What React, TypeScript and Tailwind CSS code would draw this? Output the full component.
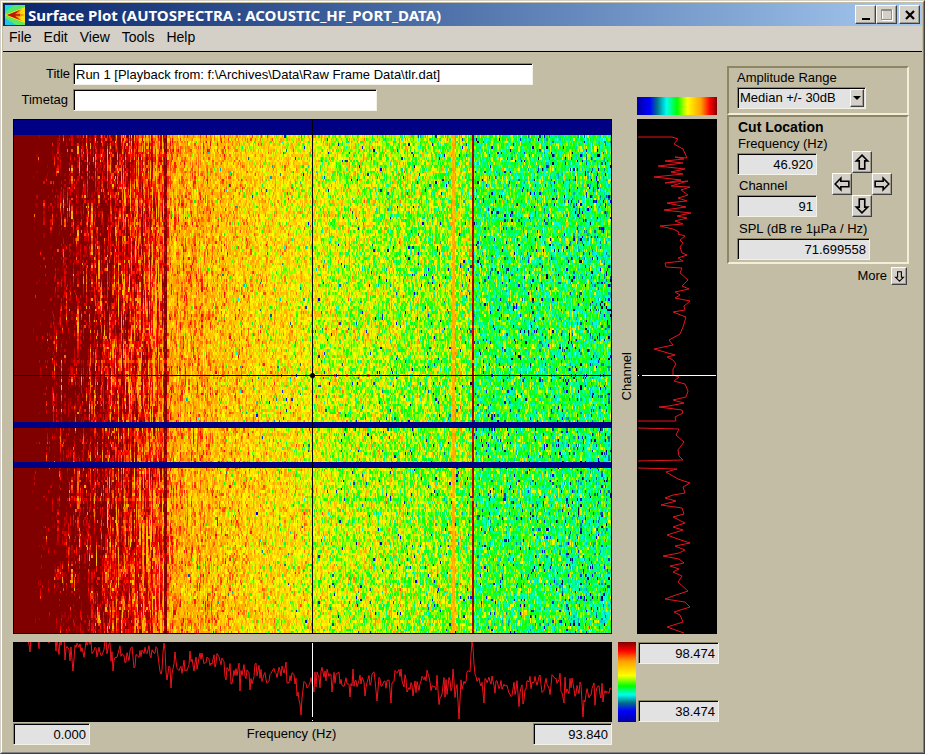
import { useState } from 'react';

const PLOT_W = 599;
const PLOT_H = 515;
const BINS = 512;
const ROWS = 190;
const LEVELS = 36;

// [position, r, g, b]
const colorStops = [
  [0, 0, 0, 60],
  [0.06, 0, 0, 150],
  [0.16, 0, 0, 255],
  [0.27, 0, 110, 140],
  [0.38, 0, 255, 240],
  [0.53, 0, 255, 0],
  [0.66, 255, 255, 0],
  [0.8, 255, 160, 0],
  [0.9, 255, 0, 0],
  [1, 128, 0, 0],
];

const baseLevel = [
  [0, 1.4], [14, 1.25], [24, 1.15], [50, 1.06], [80, 0.99], [105, 0.94], [125, 0.89], [150, 0.855],
  [156, 0.8], [220, 0.75], [280, 0.7], [320, 0.65], [380, 0.625], [425, 0.6],
  [457, 0.6], [464, 0.53], [530, 0.52], [599, 0.49],
];

const spectrumBase = [
  [0, -12], [12, -10], [40, -6], [50, 2], [60, 8], [66, 0], [80, 5], [95, 8], [110, 6],
  [125, 14], [140, 9], [148, 18], [156, 25], [165, 20], [185, 19], [205, 22], [215, 29],
  [228, 32], [245, 29], [260, 33], [275, 28], [287, 42], [298, 37], [310, 34], [328, 34],
  [335, 44], [345, 36], [365, 44], [390, 36], [400, 44], [415, 38], [430, 46], [445, 42],
  [460, 38], [480, 42], [510, 47], [527, 40], [550, 45], [575, 47], [599, 46],
];

const spectrumSpikes: Record<number, number> = {
  17: 10, 43: 9, 52: 18, 59: 18, 60: 29, 100: 29, 113: 20, 121: 26, 150: 10, 151: 1, 152: 8,
  154: 38, 158: 46, 189: 11, 218: 42, 227: 49, 237: 48, 273: 20, 284: 54, 285: 50, 286: 58,
  287: 62, 288: 73, 289: 56, 294: 46, 301: 50, 337: 55, 340: 27, 352: 54, 364: 59, 378: 61,
  388: 27, 400: 54, 440: 27, 445: 60, 446: 77, 447: 58, 457: 30, 458: 12, 459: 0, 460: 6,
  461: 22, 462: 32, 471: 61, 510: 62, 527: 33, 551: 61, 569: 60, 570: 75, 571: 58, 590: 60,
};

const channelTrace =
  '1,18 35,18 41,20 37,25 46,30 50,39 38,38 47,40 28,42 46,44 21,47 48,50 34,53 46,55 17,58 44,61 ' +
  '28,64 51,62 34,67 53,68 44,71 51,76 41,79 50,82 30,84 49,88 27,91 54,94 40,97 50,99 38,102 46,105 ' +
  '23,107 36,110 42,113 41,115 48,117 43,121 46,124 43,128 45,134 50,136 41,139 46,142 28,144 29,148 ' +
  '45,149 43,154 51,161 45,167 52,170 38,173 43,176 38,179 53,182 47,187 48,191 36,193 49,198 46,208 ' +
  '43,215 32,221 36,226 17,230 38,236 30,238 36,241 39,245 36,250 36,256 42,258 37,262 48,265 51,272 ' +
  '49,278 36,281 47,284 32,287 22,288 45,291 46,294 38,298 39,302 1,302 M1,309 42,310 39,316 47,323 ' +
  '41,331 42,337 46,341 1,342 M1,349 40,350 29,353 41,360 53,364 46,368 48,374 36,376 28,379 39,382 ' +
  '24,386 45,389 47,395 36,398 48,404 36,408 46,411 30,416 41,420 53,424 38,427 48,431 42,434 26,437 ' +
  '42,440 47,444 33,447 42,450 36,453 45,457 41,463 51,472 36,477 28,480 48,483 53,488 37,493 43,496 ' +
  '46,503 30,508 47,514';

function createRandom(seed: number) {
  let s = seed;
  return () => {
    s = (s + 0x6d2b79f5) | 0;
    let t = Math.imul(s ^ (s >>> 15), 1 | s);
    t = (t + Math.imul(t ^ (t >>> 7), 61 | t)) ^ t;
    return ((t ^ (t >>> 14)) >>> 0) / 4294967296;
  };
}

function interpolate(points: number[][], x: number) {
  for (let i = 1; i < points.length; i++) {
    if (x <= points[i][0]) {
      const [x0, y0] = points[i - 1];
      const [x1, y1] = points[i];
      return y0 + ((y1 - y0) * (x - x0)) / (x1 - x0);
    }
  }
  return points[points.length - 1][1];
}

function levelColor(level: number) {
  const v = level / (LEVELS - 1);
  const channel = (i: number) => Math.round(interpolate(colorStops.map((s) => [s[0], s[i]]), v));
  return `rgb(${channel(1)},${channel(2)},${channel(3)})`;
}

const streakWidth = [
  [0, 0.12], [20, 0.15], [60, 0.16], [120, 0.13], [150, 0.11], [160, 0.09], [260, 0.1],
  [340, 0.13], [460, 0.14], [599, 0.16],
];

function buildSurface() {
  const random = createRandom(91);
  const gauss = () => random() + random() + random() + random() - 2;
  const state = Array.from({ length: BINS }, () => gauss());
  const columnGain = Array.from({ length: BINS }, () => gauss());
  const paths: string[] = Array(LEVELS).fill('');

  for (let row = 6; row < ROWS; row++) {
    const top = Math.round((row * PLOT_H) / ROWS);
    const height = Math.round(((row + 1) * PLOT_H) / ROWS) - top;
    let runStart = 0;
    let runLevel = -1;

    for (let bin = 0; bin < BINS; bin++) {
      const x = Math.round((bin * PLOT_W) / BINS);
      const keep = x < 150 ? 0.82 : x < 200 ? 0.55 : 0.25;
      state[bin] = keep * state[bin] + Math.sqrt(1 - keep * keep) * gauss();

      let v = interpolate(baseLevel, x) + state[bin] * interpolate(streakWidth, x);
      v += columnGain[bin] * (x < 150 ? 0.03 : 0.012);
      if (x > 16 && x < 150 && random() < 0.06) v -= 0.13;
      // broadband fades get more frequent towards high frequency
      const dip = random();
      if (x > 170 && dip < (x / PLOT_W) * 0.14) v -= 0.13;
      if (x > 170 && dip < (x / PLOT_W) ** 2 * 0.04) v -= 0.3;
      v = x > 150 ? Math.min(v, 0.9) : Math.max(v, 0.74);

      if (x >= 151 && x <= 153) v = random() < 0.85 ? 0.99 : 0.92;
      if (x >= 439 && x <= 441) v = 0.74 + random() * 0.06;
      if (x === 446 || x === 447) v += 0.05;
      if (x >= 458 && x <= 460) v = random() < 0.75 ? 0.97 : 0.9;
      if ((row === 89 || row === 140) && x > 25) v = v * 0.75 + (x < 300 ? 0.19 : 0.11);

      const level = Math.max(0, Math.min(LEVELS - 1, Math.round(v * (LEVELS - 1))));
      if (level !== runLevel) {
        if (runLevel >= 0) paths[runLevel] += `M${runStart} ${top}H${x}v${height}H${runStart}z`;
        runStart = x;
        runLevel = level;
      }
    }
    paths[runLevel] += `M${runStart} ${top}H${PLOT_W}v${height}H${runStart}z`;
  }
  return paths;
}

function buildSpectrum() {
  const random = createRandom(46);
  const points: string[] = [];
  for (let x = 0; x < PLOT_W; x++) {
    if (spectrumSpikes[x] !== undefined) {
      points.push(`${x},${spectrumSpikes[x]}`);
    } else if (x % 5 !== 0) {
      const noise = (random() + random() - 1) * 14 + (random() < 0.1 ? 9 : 0);
      points.push(`${x},${(interpolate(spectrumBase, x) + noise).toFixed(1)}`);
    }
  }
  return points.join(' ');
}

const surfacePaths = buildSurface();
const spectrumTrace = buildSpectrum();

const sunken =
  'h-[22px] min-w-0 border border-t-[#8c8664] border-l-[#8c8664] border-r-[#f4f2e6] border-b-[#f4f2e6] text-[13px] leading-4 text-black shadow-[inset_1px_1px_0_#000] outline-none';
const numberField = `${sunken} bg-[#e2e2e2] pr-[3px] pl-0.5 text-right`;
const raised =
  'flex items-center justify-center border border-t-white border-l-white border-r-[#404040] border-b-[#404040] bg-[#d4d0c8] shadow-[inset_-1px_-1px_0_#a09c94]';

const menus = ['File', 'Edit', 'View', 'Tools', 'Help'];

function Surface() {
  return (
    <svg
      viewBox={`0 0 ${PLOT_W} ${PLOT_H}`}
      preserveAspectRatio="none"
      className="h-full w-full"
      shapeRendering="crispEdges"
      role="img"
      aria-label="Autospectra surface"
    >
      <rect width={PLOT_W} height={PLOT_H} fill="#000084" />
      {surfacePaths.map((d, level) => (
        <path key={level} d={d} fill={levelColor(level)} />
      ))}
      {/* dead channels */}
      <rect y="303" width={PLOT_W} height="6" fill="#000084" />
      <rect y="343" width={PLOT_W} height="6" fill="#000084" />
      {/* cut cursor */}
      <path d="M0 256.5H599M299.5 0V515" stroke="#000" />
      <circle cx="299.5" cy="256.5" r="2.5" fill="#000" shapeRendering="auto" />
      <rect x="0.5" y="0.5" width="598" height="514" fill="none" stroke="#000" />
    </svg>
  );
}

function ArrowIcon({ className = '' }: { className?: string }) {
  return (
    <svg viewBox="0 0 14 14" className={className} fill="none" stroke="#000" strokeWidth="1.4">
      <path d="M7 1L12 6H9.4V13H4.6V6H2Z" />
    </svg>
  );
}

function AppIcon() {
  return (
    <svg viewBox="0 0 20 20" className="size-5">
      <rect width="20" height="20" fill="#f6e018" />
      <path d="M0 0H20V4L8 7L0 10Z" fill="#58e868" />
      <path d="M0 0H9L0 7Z" fill="#20d8d8" />
      <path d="M0 20H20V16L8 13L0 10Z" fill="#60e860" />
      <path d="M0 20H11L0 13Z" fill="#20c8e0" />
      <path d="M0 10L20 2V18Z" fill="#f8e010" />
      <path d="M2 10L17 4L14 8L20 10L14 12L17 16Z" fill="#f89010" />
      <path d="M2 10L15 5L10 9.2H15V10.8H10L15 15Z" fill="#b81808" />
    </svg>
  );
}

function TitleBar() {
  return (
    <header className="flex h-[23px] items-center bg-linear-to-r from-[#0a246a] to-[#a6caf0] px-0.5">
      <AppIcon />
      <h1 className="ml-[3px] flex-1 truncate font-['Noto_Sans',sans-serif] text-[15px] leading-5 font-bold text-white">
        Surface Plot (AUTOSPECTRA : ACOUSTIC_HF_PORT_DATA)
      </h1>
      <button aria-label="Minimize" className={`${raised} h-[19px] w-[21px]`}>
        <svg viewBox="0 0 16 14" className="h-3.5 w-4">
          <path d="M4 10h8v2H4z" />
        </svg>
      </button>
      <button aria-label="Maximize" className={`${raised} h-[19px] w-[21px]`}>
        <svg viewBox="0 0 16 14" className="h-3.5 w-4" fill="none">
          <path d="M3.5 2v10.5h10V2z" stroke="#fff" />
          <path d="M2.5 1.5v10h10v-10zM2.5 2.5h10" stroke="#908c84" />
        </svg>
      </button>
      <button aria-label="Close" className={`${raised} ml-0.5 h-[19px] w-[21px]`}>
        <svg viewBox="0 0 16 14" className="h-3.5 w-4" fill="none">
          <path d="M4 3l8 8M12 3l-8 8" stroke="#000" strokeWidth="2.2" />
        </svg>
      </button>
    </header>
  );
}

function ControlPanel() {
  const [range, setRange] = useState('Median +/- 30dB');

  return (
    <aside className="mt-[3px] mr-[13px] ml-2 w-[182px] shrink-0">
      <section className="h-[49px] border-2 border-t-[#8c8664] border-r-[#f2eed8] border-b-[#f2eed8] border-l-[#8c8664] px-2">
        <label htmlFor="range" className="block pt-px leading-[18px]">
          Amplitude Range
        </label>
        <div className="relative w-[129px]">
          <select
            id="range"
            value={range}
            onChange={(e) => setRange(e.target.value)}
            className={`${sunken} w-full appearance-none bg-[#e2e2e2] px-0.5 py-0`}
          >
            <option>Median +/- 30dB</option>
            <option>Median +/- 20dB</option>
          </select>
          <span className={`${raised} pointer-events-none absolute top-0.5 right-0.5 h-[18px] w-3.5`}>
            <svg viewBox="0 0 8 4" className="h-1 w-2">
              <path d="M0 0h8L4 4z" />
            </svg>
          </span>
        </div>
      </section>

      <section className="border-2 border-t-[#8c8664] border-r-[#f2eed8] border-b-[#f2eed8] border-l-[#8c8664] px-2 py-0.5">
        <h2 className="pl-px text-sm leading-4 font-bold">Cut Location</h2>
        <div className="mt-px flex items-start gap-[15px]">
          <div className="flex w-20 flex-col gap-[3px]">
            <div className="flex flex-col gap-px">
              <label htmlFor="cut-frequency" className="pl-px whitespace-nowrap">
                Frequency (Hz)
              </label>
              <input id="cut-frequency" defaultValue="46.920" className={numberField} />
            </div>
            <div className="flex flex-col gap-px">
              <label htmlFor="cut-channel" className="pl-0.5">
                Channel
              </label>
              <input id="cut-channel" defaultValue="91" className={numberField} />
            </div>
          </div>
          <div className="mt-[15px] grid grid-cols-[20px_20px_20px] grid-rows-[22px_22px_22px]">
            <button aria-label="Up" className={`${raised} col-start-2 row-start-1`}>
              <ArrowIcon className="size-4" />
            </button>
            <button aria-label="Left" className={`${raised} col-start-1 row-start-2`}>
              <ArrowIcon className="size-4 -rotate-90" />
            </button>
            <button aria-label="Right" className={`${raised} col-start-3 row-start-2`}>
              <ArrowIcon className="size-4 rotate-90" />
            </button>
            <button aria-label="Down" className={`${raised} col-start-2 row-start-3`}>
              <ArrowIcon className="size-4 rotate-180" />
            </button>
          </div>
        </div>
        <div className="mt-1 flex flex-col gap-px">
          <label htmlFor="cut-spl" className="pl-0.5">
            SPL (dB re 1µPa / Hz)
          </label>
          <input id="cut-spl" defaultValue="71.699558" className={`${numberField} w-[133px]`} />
        </div>
      </section>

      <div className="mt-[3px] flex items-center justify-end gap-1 pr-0.5">
        <span id="more-label">More</span>
        <button aria-labelledby="more-label" className={`${raised} h-[18px] w-4`}>
          <ArrowIcon className="size-[11px] rotate-180" />
        </button>
      </div>
    </aside>
  );
}

export default function App() {
  return (
    <div className="flex min-h-screen flex-col border border-t-[#d4d0c8] border-r-[#404040] border-b-[#404040] border-l-[#d4d0c8] bg-[#c3bda5] font-['Liberation_Sans',Arial,sans-serif] text-[13px] leading-4 text-black">
      <div className="flex flex-1 flex-col border border-t-white border-r-[#808080] border-b-[#808080] border-l-white p-px">
        <TitleBar />
        <nav className="flex h-[26px] items-center gap-3 border-b border-black bg-[#d4d0c8] px-1.5 pb-1 text-sm leading-4">
          {menus.map((menu) => (
            <button key={menu}>{menu}</button>
          ))}
        </nav>

        <main className="flex flex-1 pt-[11px] pb-1.5 pl-2.5">
          <div className="flex min-w-0 flex-1 flex-col">
            <div className="flex items-end justify-between pb-1">
              <div className="flex flex-col gap-1 pb-1">
                <div className="flex items-center">
                  <label htmlFor="title" className="w-[60px] pr-[3px] text-right">
                    Title
                  </label>
                  <input
                    id="title"
                    defaultValue="Run 1 [Playback from: f:\Archives\Data\Raw Frame Data\tlr.dat]"
                    className={`${sunken} w-[460px] bg-white px-0.5`}
                  />
                </div>
                <div className="flex items-center">
                  <label htmlFor="timetag" className="w-[60px] pr-[5px] text-right">
                    Timetag
                  </label>
                  <input id="timetag" defaultValue="" className={`${sunken} w-[304px] bg-white px-0.5`} />
                </div>
              </div>
              <div className="mr-0.5 h-[18px] w-20 bg-[linear-gradient(to_right,#0000a0,#0000ff_16%,#006e8c_25%,#00fff0_37%,#00ff00_50%,#ffff00_63%,#ffa000_80%,#ff0000_91%,#800000)]" />
            </div>

            <div className="flex flex-1">
              <div className="relative min-w-0 flex-1">
                <div className="absolute inset-0">
                  <Surface />
                </div>
              </div>
              <div className="flex w-[25px] items-center justify-center pl-1">
                <span className="rotate-180 [writing-mode:vertical-rl]">Channel</span>
              </div>
              <div className="relative mr-0.5 min-h-80 w-20 bg-black">
                <svg
                  viewBox="0 0 80 515"
                  preserveAspectRatio="none"
                  className="absolute inset-0 h-full w-full"
                  fill="none"
                  role="img"
                  aria-label="Channel cut"
                >
                  <path d={`M${channelTrace}`} stroke="#e8141c" />
                  <path d="M1 256.5h1M5 256.5h74" stroke="#fff" />
                </svg>
              </div>
            </div>

            <div className="mt-2 flex h-20">
              <div className="min-w-0 flex-1 bg-black">
                <svg
                  viewBox="0 0 599 80"
                  preserveAspectRatio="none"
                  className="h-full w-full"
                  fill="none"
                  role="img"
                  aria-label="Frequency cut"
                >
                  <polyline points={spectrumTrace} stroke="#f0141c" strokeLinejoin="bevel" />
                  <path d="M299.5 1v74M299.5 78v1" stroke="#fff" />
                </svg>
              </div>
              <div className="mr-0.5 ml-1.5 w-[18px] bg-[linear-gradient(to_top,#0000a0,#0000ff_14%,#006e8c_24%,#00fff0_34%,#00ff00_45%,#ffff00_58%,#ffa000_76%,#ff0000_89%,#800000)]" />
              <div className="flex w-[81px] flex-col justify-between">
                <input aria-label="Maximum level" defaultValue="98.474" className={numberField} />
                <input aria-label="Minimum level" defaultValue="38.474" className={numberField} />
              </div>
            </div>

            <div className="mt-px mr-[107px] flex items-center">
              <input aria-label="Start frequency" defaultValue="0.000" className={`${numberField} w-[77px]`} />
              <span className="flex-1 pr-10 text-center">Frequency (Hz)</span>
              <input aria-label="End frequency" defaultValue="93.840" className={`${numberField} w-[79px]`} />
            </div>
          </div>

          <ControlPanel />
        </main>
      </div>
    </div>
  );
}
